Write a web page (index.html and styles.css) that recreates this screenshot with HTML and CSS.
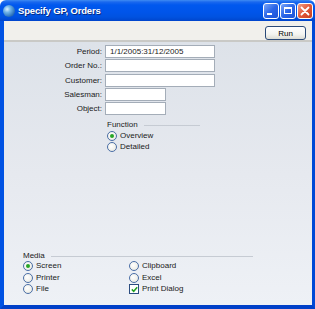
FILE: index.html
```html
<!DOCTYPE html>
<html>
<head>
<meta charset="utf-8">
<link rel="stylesheet" href="styles.css">
</head>
<body>
<div class="window">
  <div class="titlebar">
    <span class="appicon"></span>
    <span class="title">Specify GP, Orders</span>
    <div class="tbuttons">
      <span class="tbtn min"><span class="minbar"></span></span>
      <span class="tbtn max"><span class="maxbox"></span></span>
      <span class="tbtn close">
        <svg width="10" height="10" viewBox="0 0 10 10"><path d="M1.5 1.5 L8.5 8.5 M8.5 1.5 L1.5 8.5" stroke="#fff" stroke-width="1.8" stroke-linecap="round"/></svg>
      </span>
    </div>
  </div>
  <div class="frame">
    <div class="toolbar">
      <button class="run">Run</button>
    </div>
    <div class="content">
      <div class="fields">
        <label class="lbl">Period:</label><div class="inp long">1/1/2005:31/12/2005</div>
        <label class="lbl">Order No.:</label><div class="inp long"></div>
        <label class="lbl">Customer:</label><div class="inp long"></div>
        <label class="lbl">Salesman:</label><div class="inp short"></div>
        <label class="lbl">Object:</label><div class="inp short"></div>
      </div>
      <div class="group function">
        <div class="gtitle"><span>Function</span><span class="gline"></span></div>
        <div class="opt"><span class="radio on"></span><span>Overview</span></div>
        <div class="opt"><span class="radio"></span><span>Detailed</span></div>
      </div>
      <div class="group media">
        <div class="gtitle"><span>Media</span><span class="gline"></span></div>
        <div class="mgrid">
          <div class="opt"><span class="radio on"></span><span>Screen</span></div>
          <div class="opt"><span class="radio"></span><span>Clipboard</span></div>
          <div class="opt"><span class="radio"></span><span>Printer</span></div>
          <div class="opt"><span class="radio"></span><span>Excel</span></div>
          <div class="opt"><span class="radio"></span><span>File</span></div>
          <div class="opt"><span class="check"><svg width="7" height="7" viewBox="0 0 7 7"><path d="M0.8 3.4 L2.7 5.3 L6.2 1.2" fill="none" stroke="#21a121" stroke-width="1.5"/></svg></span><span>Print Dialog</span></div>
        </div>
      </div>
    </div>
  </div>
</div>
</body>
</html>
```

FILE: styles.css
```css
html, body {
  margin: 0;
  padding: 0;
  background: #ffffff;
}
.window {
  width: 315px;
  height: 309px;
  display: flex;
  flex-direction: column;
  font-family: "Liberation Sans", Arial, sans-serif;
  font-size: 8px;
  color: #1a1a1a;
}
.titlebar {
  height: 21px;
  flex: none;
  display: flex;
  align-items: center;
  background: linear-gradient(#3f8cf3 0px, #1a68ee 2px, #0058ee 5px, #0055ea 12px, #0052e0 17px, #0045cc 21px);
  border-radius: 6px 6px 0 0;
  padding-left: 3px;
  padding-right: 2px;
  box-sizing: border-box;
}
.appicon {
  width: 12px;
  height: 12px;
  border-radius: 50%;
  background: radial-gradient(circle at 35% 35%, #d8f0ff 0, #6fb4e8 30%, #2a6fb8 70%, #1a4a8a 100%);
  flex: none;
}
.title {
  margin-left: 3px;
  color: #fff;
  font-weight: bold;
  font-size: 9.5px;
  letter-spacing: -0.15px;
  text-shadow: 1px 1px 0 #0a2a80;
  flex: 1;
}
.tbuttons {
  display: flex;
  gap: 1px;
}
.tbtn {
  width: 16px;
  height: 16px;
  box-sizing: border-box;
  border: 1px solid #fff;
  border-radius: 3px;
  display: flex;
  align-items: center;
  justify-content: center;
}
.min, .max {
  background: linear-gradient(135deg, #7aa6f8 0, #2b66e8 50%, #1d53d6 100%);
}
.close {
  background: linear-gradient(135deg, #f0a088 0, #e0583a 50%, #c8401f 100%);
}
.minbar {
  width: 5px;
  height: 2px;
  background: #fff;
  margin-top: 6px;
  margin-right: 3px;
}
.maxbox {
  width: 8px;
  height: 7px;
  box-sizing: border-box;
  border: 1px solid #fff;
  border-top-width: 2px;
}
.frame {
  flex: 1;
  display: flex;
  flex-direction: column;
  border-left: 4px solid #0052e3;
  border-right: 3px solid #0049d6;
  border-bottom: 4px solid #0040c8;
}
.toolbar {
  height: 21px;
  flex: none;
  background: #f1f0ec;
  border-bottom: 2px solid #c9c9c6;
  display: flex;
  justify-content: flex-end;
  align-items: flex-start;
  box-sizing: border-box;
  padding-top: 5px;
  padding-right: 6px;
}
.run {
  width: 41px;
  height: 14px;
  padding: 0;
  font-family: "Liberation Sans", Arial, sans-serif;
  font-size: 8px;
  color: #000;
  border: 1px solid #2b4a78;
  border-radius: 3px;
  background: linear-gradient(#ffffff 0, #f4f4f0 60%, #dcdcd4 100%);
}
.content {
  flex: 1;
  display: flex;
  flex-direction: column;
  background: linear-gradient(#dde2e9 0, #e6e9ef 50%, #eef1f6 100%);
}
.fields {
  display: grid;
  grid-template-columns: 98px auto;
  column-gap: 3px;
  row-gap: 1.25px;
  padding-top: 3px;
  align-items: center;
}
.lbl {
  text-align: right;
  line-height: 13px;
}
.inp {
  height: 13px;
  box-sizing: border-box;
  background: #fff;
  border: 1px solid #a4adb8;
  line-height: 11px;
  padding-left: 4px;
}
.long { width: 110px; }
.short { width: 61px; }
.gtitle {
  display: flex;
  align-items: center;
  height: 10px;
  line-height: 10px;
}
.gline {
  flex: 1;
  height: 1px;
  background: #c6cbd3;
  margin-left: 6px;
  margin-top: 1px;
}
.function {
  margin-left: 103px;
  width: 93px;
  margin-top: 5px;
}
.function .gtitle { margin-bottom: 1px; }
.opt {
  display: flex;
  align-items: center;
  height: 10.5px;
  line-height: 10px;
}
.radio, .check {
  width: 10px;
  height: 10px;
  box-sizing: border-box;
  border: 1px solid #4a6ea6;
  background: radial-gradient(circle at 40% 40%, #ffffff 0, #f0f0ea 60%, #dcdcd6 100%);
  margin-right: 3px;
  flex: none;
  display: flex;
  align-items: center;
  justify-content: center;
}
.radio { border-radius: 50%; }
.radio.on::after {
  content: "";
  width: 4px;
  height: 4px;
  border-radius: 50%;
  background: #27a527;
}
.check {
  border-color: #2c4d80;
  background: #fff;
}
.media {
  margin-top: auto;
  margin-left: 19px;
  width: 230px;
  padding-bottom: 10px;
}
.mgrid {
  display: grid;
  grid-template-columns: 106px 106px;
}
.mgrid .opt { height: 11.5px; }
```
